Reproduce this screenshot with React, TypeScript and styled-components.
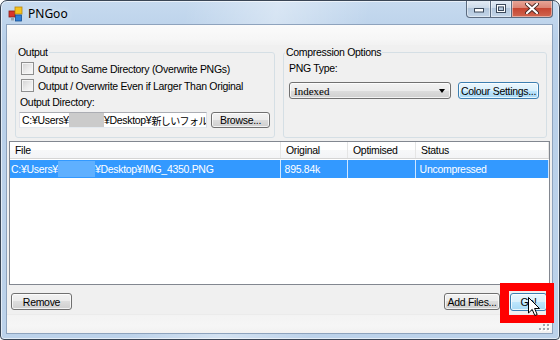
import React from "react";
import styled, { createGlobalStyle } from "styled-components";

const GlobalStyle = createGlobalStyle`
  html, body {
    margin: 0;
    padding: 0;
    background: #ffffff;
  }
  body {
    font-family: "Liberation Sans", "Noto Sans CJK JP", sans-serif;
    font-size: 10.5px;
    letter-spacing: -0.3px;
    color: #000;
  }
`;

const Window = styled.div`
  position: relative;
  width: 560px;
  height: 340px;
  box-sizing: border-box;
  display: flex;
  flex-direction: column;
  border: 1px solid #3a4656;
  border-radius: 7px 7px 4px 4px;
  overflow: hidden;
  background:
    linear-gradient(100deg, rgba(255, 255, 255, 0) 30%, rgba(255, 255, 255, 0.35) 45%, rgba(255, 255, 255, 0) 60%),
    linear-gradient(#c6daef, #b9d0e9 40px, #bcd2ea);
  box-shadow: inset 0 0 0 1px rgba(255, 255, 255, 0.6);
`;

const TitleBar = styled.div`
  height: 23px;
  flex: none;
  display: flex;
  align-items: flex-start;
  padding-left: 7px;
`;

const TitleLeft = styled.div`
  display: flex;
  align-items: center;
  gap: 4px;
  height: 23px;
  padding-top: 1px;
`;

const TitleText = styled.span`
  font-family: "Noto Sans", "Liberation Sans", sans-serif;
  font-size: 12px;
  letter-spacing: 0;
  color: #000;
  text-shadow: 0 0 6px rgba(255, 255, 255, 0.9);
`;

const CaptionGroup = styled.div`
  margin-left: auto;
  margin-right: 6px;
  margin-top: -1px;
  display: flex;
  height: 18px;
`;

const CaptionButton = styled.div<{ $kind: "min" | "max" | "close" }>`
  box-sizing: border-box;
  height: 18px;
  width: ${(p) => (p.$kind === "min" ? 25 : p.$kind === "max" ? 21 : 41)}px;
  display: flex;
  align-items: ${(p) => (p.$kind === "min" ? "flex-end" : "center")};
  padding-bottom: ${(p) => (p.$kind === "min" ? 4 : 0)}px;
  justify-content: center;
  border: 1px solid #5b6b80;
  border-top: none;
  border-left-width: ${(p) => (p.$kind === "min" ? 1 : 0)}px;
  border-radius: ${(p) =>
    p.$kind === "min" ? "0 0 0 4px" : p.$kind === "close" ? "0 0 4px 0" : "0"};
  box-shadow: inset 0 0 0 1px rgba(255, 255, 255, 0.45);
  background: ${(p) =>
    p.$kind === "close"
      ? "linear-gradient(#e9a99b 0%, #dc8575 45%, #c74531 50%, #d06650 100%)"
      : "linear-gradient(#e6eef7 0%, #cddbea 45%, #b2c6dc 50%, #c3d5e8 100%)"};
`;

const ClientFrame = styled.div`
  flex: 1;
  display: flex;
  padding: 0 6px 5px 5px;
  min-height: 0;
`;

const Client = styled.div`
  flex: 1;
  display: flex;
  flex-direction: column;
  border: 1px solid #8ea3bd;
  background: #f0f0f0;
  min-width: 0;
`;

const ToolStrip = styled.div`
  height: 20px;
  flex: none;
  background: linear-gradient(#fbfbfb, #f6f6f6 70%, #f2f2f2);
`;

const OptionsPanel = styled.div`
  height: 96px;
  flex: none;
  display: flex;
  gap: 8px;
  padding: 1px 5px 0 8px;
  box-sizing: border-box;
`;

const Group = styled.fieldset<{ $w: number }>`
  width: ${(p) => p.$w}px;
  box-sizing: border-box;
  height: 92px;
  margin: 0;
  padding: 0 4px 0 3px;
  border: 1px solid #d5dfe5;
  border-radius: 3px;
  display: flex;
  flex-direction: column;
  min-width: 0;
`;

const Legend = styled.legend`
  padding: 0 1px;
  margin-left: -2px;
  font-size: 10.5px;
  line-height: 13px;
  color: #000;
`;

const CheckRow = styled.label`
  display: flex;
  align-items: center;
  gap: 4px;
  height: 15px;
  margin-left: 2px;
  margin-top: 2px;
  white-space: nowrap;
`;

const CheckBox = styled.span`
  width: 13px;
  height: 13px;
  box-sizing: border-box;
  flex: none;
  border: 1px solid #8e8f8f;
  background: linear-gradient(135deg, #d2d2d2 0%, #ececec 55%, #fbfbfb 100%);
  box-shadow: inset 0 0 0 1px #f5f5f5;
`;

const FieldLabel = styled.div<{ $top: number; $left?: number }>`
  height: 13px;
  line-height: 13px;
  margin-top: ${(p) => p.$top}px;
  margin-left: ${(p) => p.$left ?? 1}px;
`;

const FieldRow = styled.div<{ $top: number }>`
  display: flex;
  align-items: flex-start;
  margin-top: ${(p) => p.$top}px;
`;

const TextBox = styled.div`
  width: 188px;
  height: 16px;
  box-sizing: border-box;
  border: 1px solid #abadb3;
  border-bottom-color: #e3e9ef;
  border-left-color: #e2e3ea;
  border-right-color: #dbdfe6;
  background: #fff;
  overflow: hidden;
  white-space: nowrap;
  display: flex;
  align-items: center;
  padding-left: 2px;
`;

const Japanese = styled.span`
  font-size: 10px;
  letter-spacing: -0.6px;
`;

const Redacted = styled.span<{ $w: number; $h: number; $bg: string }>`
  display: inline-block;
  flex: none;
  width: ${(p) => p.$w}px;
  height: ${(p) => p.$h}px;
  background: ${(p) => p.$bg};
`;

const Button = styled.div<{ $w: number; $h?: number; $focus?: boolean; $ml?: number }>`
  width: ${(p) => p.$w}px;
  height: ${(p) => p.$h ?? 16}px;
  margin-left: ${(p) => p.$ml ?? 0}px;
  box-sizing: border-box;
  flex: none;
  display: flex;
  align-items: center;
  justify-content: center;
  white-space: nowrap;
  border: 1px solid ${(p) => (p.$focus ? "#3c7fb1" : "#707070")};
  border-radius: 3px;
  box-shadow: inset 0 0 0 1px rgba(255, 255, 255, 0.75);
  background: ${(p) =>
    p.$focus
      ? "linear-gradient(#eaf6fd 0%, #d9f0fc 50%, #bee6fd 50%, #a7d9f5 100%)"
      : "linear-gradient(#f2f2f2 0%, #ebebeb 50%, #dddddd 50%, #cfcfcf 100%)"};
  color: #000;
`;

const Combo = styled.div`
  width: 162px;
  height: 17px;
  margin-left: 2px;
  box-sizing: border-box;
  display: flex;
  align-items: center;
  justify-content: space-between;
  padding: 0 5px 0 4px;
  border: 1px solid #707070;
  border-radius: 3px;
  box-shadow: inset 0 0 0 1px rgba(255, 255, 255, 0.75);
  background: linear-gradient(#f2f2f2 0%, #ebebeb 50%, #dddddd 50%, #cfcfcf 100%);
  font-family: "Liberation Serif", serif;
  font-size: 11px;
  letter-spacing: 0;
`;

const ComboArrow = styled.span`
  width: 0;
  height: 0;
  border-left: 3.5px solid transparent;
  border-right: 3.5px solid transparent;
  border-top: 4px solid #000;
  margin-top: 1px;
`;

const ListView = styled.div`
  height: 144px;
  flex: none;
  margin: 0 2px;
  box-sizing: border-box;
  border: 1px solid #828790;
  background: #fff;
  display: flex;
  flex-direction: column;
  overflow: hidden;
`;

const columns = [
  { title: "File", width: 271 },
  { title: "Original", width: 67 },
  { title: "Optimised", width: 68 },
  { title: "Status", width: 133 },
];

const HeaderRow = styled.div`
  display: flex;
  height: 16px;
  flex: none;
  background: linear-gradient(#ffffff, #ffffff 50%, #f7f8f9 50%, #f3f4f6);
  border-bottom: 1px solid #d5d5d5;
`;

const HeaderCell = styled.div<{ $w: number }>`
  width: ${(p) => p.$w}px;
  flex: none;
  box-sizing: border-box;
  border-right: 1px solid #e5e5e5;
  padding-left: 5px;
  line-height: 16px;
`;

const DataRow = styled.div`
  display: flex;
  height: 18px;
  margin-top: 1px;
  flex: none;
  background: #3399ff;
  color: #fff;
`;

const DataCell = styled.div<{ $w: number }>`
  width: ${(p) => p.$w}px;
  flex: none;
  box-sizing: border-box;
  border-right: 1px solid #cfe6ff;
  padding-left: 1px;
  display: flex;
  align-items: center;
  white-space: nowrap;
  overflow: hidden;
`;

const ButtonBar = styled.div`
  height: 29px;
  flex: none;
  display: flex;
  align-items: flex-start;
  padding: 8px 5px 0 4px;
  box-sizing: border-box;
`;

const Spacer = styled.div`
  flex: 1;
`;

const StatusStrip = styled.div`
  flex: 1;
  display: flex;
  justify-content: flex-end;
  align-items: flex-end;
  padding: 0 2px 2px 0;
  background: linear-gradient(#f3f3f3, #f6f6f6 60%, #f1f1f1);
  border-top: 1px solid #ebebeb;
`;

const Highlight = styled.div`
  position: absolute;
  left: 499px;
  top: 282px;
  width: 54px;
  height: 40px;
  box-sizing: border-box;
  border: 8px solid #ff0000;
  border-left-width: 9px;
  pointer-events: none;
`;

const Cursor = styled.svg`
  position: absolute;
  left: 527px;
  top: 296px;
`;

const AppIcon = () => (
  <svg width="16" height="16" viewBox="0 0 16 16">
    <rect x="1" y="5" width="6" height="6" fill="#d9342b" stroke="#8a1c16" strokeWidth="0.8" />
    <rect x="7" y="1" width="7" height="7" fill="#f4c21c" stroke="#b8860b" strokeWidth="0.8" />
    <rect x="7.5" y="9" width="6" height="6" fill="#2f7fd8" stroke="#184f8f" strokeWidth="0.8" />
    <rect x="3" y="11.5" width="3" height="3" fill="#9aa3ad" />
  </svg>
);

const MinGlyph = () => (
  <svg width="10" height="5" viewBox="0 0 10 5">
    <rect x="0.5" y="0.5" width="9" height="3.5" fill="#fff" stroke="#3c4a5c" />
  </svg>
);

const MaxGlyph = () => (
  <svg width="10" height="9" viewBox="0 0 10 9">
    <rect x="0.5" y="0.5" width="9" height="8" fill="none" stroke="#3c4a5c" />
    <rect x="1.5" y="1.5" width="7" height="6" fill="none" stroke="#fff" />
    <rect x="2.5" y="3" width="5" height="3.5" fill="none" stroke="#3c4a5c" />
  </svg>
);

const CloseGlyph = () => (
  <svg width="14" height="11" viewBox="0 0 14 11">
    <path d="M2 1 L12 10 M12 1 L2 10" stroke="#4a2a26" strokeWidth="4" strokeLinecap="round" />
    <path d="M2 1 L12 10 M12 1 L2 10" stroke="#fff" strokeWidth="2.2" strokeLinecap="round" />
  </svg>
);

const gripDots = [
  [8, 0],
  [8, 4],
  [4, 4],
  [8, 8],
  [4, 8],
  [0, 8],
];

const SizeGrip = () => (
  <svg width="11" height="11" viewBox="0 0 11 11">
    {gripDots.map(([x, y]) => (
      <g key={`${x}-${y}`}>
        <rect x={x + 1} y={y + 1} width="2" height="2" fill="#fff" />
        <rect x={x} y={y} width="2" height="2" fill="#9fa6ad" />
      </g>
    ))}
  </svg>
);

export default function App() {
  return (
    <>
      <GlobalStyle />
      <Window>
        <TitleBar>
          <TitleLeft>
            <AppIcon />
            <TitleText>PNGoo</TitleText>
          </TitleLeft>
          <CaptionGroup>
            <CaptionButton $kind="min">
              <MinGlyph />
            </CaptionButton>
            <CaptionButton $kind="max">
              <MaxGlyph />
            </CaptionButton>
            <CaptionButton $kind="close">
              <CloseGlyph />
            </CaptionButton>
          </CaptionGroup>
        </TitleBar>

        <ClientFrame>
          <Client>
            <ToolStrip />

            <OptionsPanel>
              <Group $w={261}>
                <Legend>Output</Legend>
                <CheckRow>
                  <CheckBox />
                  Output to Same Directory (Overwrite PNGs)
                </CheckRow>
                <CheckRow>
                  <CheckBox />
                  Output / Overwrite Even if Larger Than Original
                </CheckRow>
                <FieldLabel $top={3}>Output Directory:</FieldLabel>
                <FieldRow $top={3}>
                  <TextBox>
                    C:¥Users¥
                    <Redacted $w={35} $h={14} $bg="#cbcbcb" />
                    ¥Desktop¥<Japanese>新しいフォルダ</Japanese>
                  </TextBox>
                  <Button $w={59} $ml={4}>
                    Browse...
                  </Button>
                </FieldRow>
              </Group>

              <Group $w={265}>
                <Legend>Compression Options</Legend>
                <FieldLabel $top={3} $left={2}>
                  PNG Type:
                </FieldLabel>
                <FieldRow $top={7}>
                  <Combo>
                    Indexed
                    <ComboArrow />
                  </Combo>
                  <Button $w={81} $h={17} $ml={7} $focus>
                    Colour Settings...
                  </Button>
                </FieldRow>
              </Group>
            </OptionsPanel>

            <ListView>
              <HeaderRow>
                {columns.map((c) => (
                  <HeaderCell key={c.title} $w={c.width}>
                    {c.title}
                  </HeaderCell>
                ))}
              </HeaderRow>
              <DataRow>
                <DataCell $w={columns[0].width}>
                  C:¥Users¥
                  <Redacted $w={37} $h={16} $bg="#5fb0ff" />
                  ¥Desktop¥IMG_4350.PNG
                </DataCell>
                <DataCell $w={columns[1].width}>&nbsp;895.84k</DataCell>
                <DataCell $w={columns[2].width} />
                <DataCell $w={columns[3].width}>&nbsp;Uncompressed</DataCell>
              </DataRow>
            </ListView>

            <ButtonBar>
              <Button $w={61} $h={17}>
                Remove
              </Button>
              <Spacer />
              <Button $w={56} $h={17}>
                Add Files...
              </Button>
              <Button $w={37} $h={18} $ml={10} $focus>
                Go!
              </Button>
            </ButtonBar>

            <StatusStrip>
              <SizeGrip />
            </StatusStrip>
          </Client>
        </ClientFrame>

        <Highlight />
        <Cursor width="13" height="20" viewBox="0 0 13 20">
          <path
            d="M0.5 0.5 L0.5 16 L4.2 12.4 L6.8 18.5 L9.2 17.5 L6.6 11.5 L11.5 11.5 Z"
            fill="#fff"
            stroke="#000"
            strokeWidth="1"
            strokeLinejoin="round"
          />
        </Cursor>
      </Window>
    </>
  );
}
